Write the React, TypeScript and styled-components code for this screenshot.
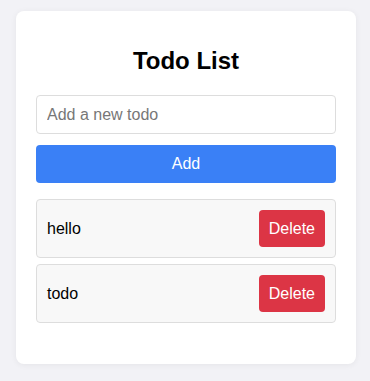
import React, { useState } from "react";
import styled, { createGlobalStyle } from "styled-components";

const GlobalStyle = createGlobalStyle`
  html, body {
    margin: 0;
    padding: 0;
    background: #f2f2f6;
    font-family: "Liberation Sans", Arial, sans-serif;
  }
  * { box-sizing: border-box; }
`;

const Page = styled.div`
  padding: 11px 14px 16px 16px;
`;

const Card = styled.div`
  width: 340px;
  background: #ffffff;
  border-radius: 8px;
  box-shadow: 0 1px 6px rgba(0, 0, 0, 0.06);
  padding: 20px 20px 41px;
`;

const Title = styled.h1`
  margin: 16px 0 20px;
  font-size: 24px;
  font-weight: 700;
  text-align: center;
  color: #000;
  line-height: 28px;
`;

const Input = styled.input`
  display: block;
  width: 100%;
  height: 39px;
  padding: 0 10px;
  font-family: inherit;
  font-size: 16px;
  color: #222;
  border: 1px solid #dddddd;
  border-radius: 4px;
  outline: none;
  &::placeholder {
    color: #777777;
  }
`;

const AddButton = styled.button`
  display: block;
  width: 100%;
  height: 38px;
  margin-top: 11px;
  border: none;
  border-radius: 4px;
  background: #3a80f6;
  color: #ffffff;
  font-family: inherit;
  font-size: 16px;
  cursor: pointer;
`;

const List = styled.ul`
  list-style: none;
  margin: 16px 0 0;
  padding: 0;
  display: flex;
  flex-direction: column;
  gap: 6px;
`;

const Item = styled.li`
  display: flex;
  align-items: center;
  justify-content: space-between;
  height: 59px;
  padding: 0 10px;
  background: #f8f8f8;
  border: 1px solid #dddddd;
  border-radius: 4px;
  font-size: 16px;
  color: #000;
`;

const DeleteButton = styled.button`
  height: 37px;
  padding: 0 10px;
  border: none;
  border-radius: 4px;
  background: #dc3545;
  color: #ffffff;
  font-family: inherit;
  font-size: 16px;
  cursor: pointer;
`;

export default function App() {
  const [todos, setTodos] = useState<string[]>(["hello", "todo"]);
  const [text, setText] = useState("");

  const add = () => {
    if (!text.trim()) return;
    setTodos([...todos, text.trim()]);
    setText("");
  };

  return (
    <>
      <GlobalStyle />
      <Page>
        <Card>
          <Title>Todo List</Title>
          <Input
            placeholder="Add a new todo"
            value={text}
            onChange={(e) => setText(e.target.value)}
          />
          <AddButton onClick={add}>Add</AddButton>
          <List>
            {todos.map((t, i) => (
              <Item key={i}>
                <span>{t}</span>
                <DeleteButton onClick={() => setTodos(todos.filter((_, j) => j !== i))}>
                  Delete
                </DeleteButton>
              </Item>
            ))}
          </List>
        </Card>
      </Page>
    </>
  );
}
